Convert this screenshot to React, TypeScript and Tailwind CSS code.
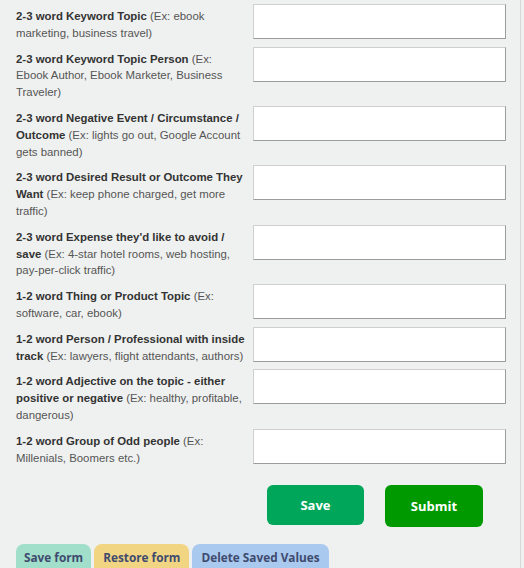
import { FC } from "react";

type Field = {
  bold: string;
  hint: string;
};

const fields: Field[] = [
  { bold: "2-3 word Keyword Topic", hint: "(Ex: ebook marketing, business travel)" },
  {
    bold: "2-3 word Keyword Topic Person",
    hint: "(Ex: Ebook Author, Ebook Marketer, Business Traveler)",
  },
  {
    bold: "2-3 word Negative Event / Circumstance / Outcome",
    hint: "(Ex: lights go out, Google Account gets banned)",
  },
  {
    bold: "2-3 word Desired Result or Outcome They Want",
    hint: "(Ex: keep phone charged, get more traffic)",
  },
  {
    bold: "2-3 word Expense they'd like to avoid / save",
    hint: "(Ex: 4-star hotel rooms, web hosting, pay-per-click traffic)",
  },
  { bold: "1-2 word Thing or Product Topic", hint: "(Ex: software, car, ebook)" },
  {
    bold: "1-2 word Person / Professional with inside track",
    hint: "(Ex: lawyers, flight attendants, authors)",
  },
  {
    bold: "1-2 word Adjective on the topic - either positive or negative",
    hint: "(Ex: healthy, profitable, dangerous)",
  },
  { bold: "1-2 word Group of Odd people", hint: "(Ex: Millenials, Boomers etc.)" },
];

const FieldRow: FC<{ field: Field }> = ({ field }) => (
  <div className="mb-[5px] flex items-start">
    <label className="w-[237px] pt-1 pr-2 text-[11.4px] leading-[16.8px] text-[#555]">
      <span className="font-bold text-[#333]">{field.bold}</span> {field.hint}
    </label>
    <input
      type="text"
      className="h-[35px] w-[253px] border border-t-[#cfcfcf] border-l-[#cfcfcf] border-r-[#9c9c9c] border-b-[#9c9c9c] bg-white outline-none"
    />
  </div>
);

const App: FC = () => {
  return (
    <div className="flex h-[568px] w-[524px] overflow-hidden bg-[#eff1f0] font-['Liberation_Sans',Arial,sans-serif]">
      <div className="flex w-[521px] flex-col border-r border-[#d6d9d8]">
        <div className="pt-1 pl-4">
          {fields.map((f) => (
            <FieldRow key={f.bold} field={f} />
          ))}
        </div>
        <div className="mt-[14px] flex items-start gap-[21px] pl-[267px] font-['Open_Sans',sans-serif] text-[13px] font-bold text-white">
          <button className="h-[40px] w-[97px] rounded-[6px] bg-[#00a65a]">Save</button>
          <button className="h-[42px] w-[98px] rounded-[6px] bg-[#009a00]">Submit</button>
        </div>
        <div className="mt-auto flex gap-[3px] pl-4 font-['Open_Sans',sans-serif] text-[11.8px] font-bold text-[#3f4b6e]">
          <button className="h-[24px] rounded-t-[8px] bg-[#a1dfca] px-[8px] pt-[3px]">Save form</button>
          <button className="h-[24px] rounded-t-[8px] bg-[#f2d583] px-[9px] pt-[3px]">Restore form</button>
          <button className="h-[24px] rounded-t-[8px] bg-[#a9c9ee] px-[9px] pt-[3px]">
            Delete Saved Values
          </button>
        </div>
      </div>
    </div>
  );
};

export default App;
